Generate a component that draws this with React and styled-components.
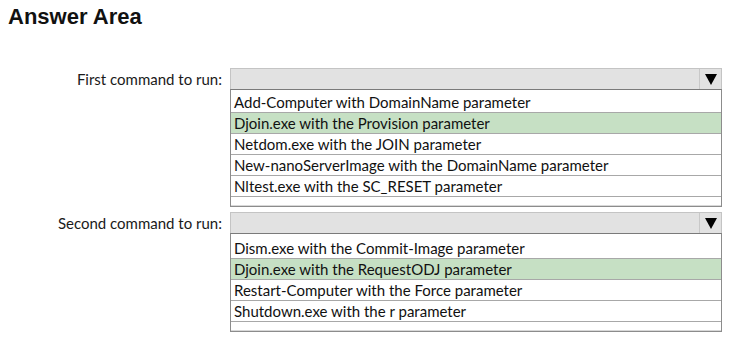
import styled, { createGlobalStyle } from 'styled-components'

const GlobalStyle = createGlobalStyle`
  body {
    margin: 0;
    padding: 0;
    background: #ffffff;
    font-family: 'Lato', 'Open Sans', sans-serif;
  }
`

const questions = [
  {
    label: 'First command to run:',
    topGap: 2,
    options: [
      'Add-Computer with DomainName parameter',
      'Djoin.exe with the Provision parameter',
      'Netdom.exe with the JOIN parameter',
      'New-nanoServerImage with the DomainName parameter',
      'Nltest.exe with the SC_RESET parameter',
    ],
    selected: 1,
  },
  {
    label: 'Second command to run:',
    topGap: 4,
    options: [
      'Dism.exe with the Commit-Image parameter',
      'Djoin.exe with the RequestODJ parameter',
      'Restart-Computer with the Force parameter',
      'Shutdown.exe with the r parameter',
    ],
    selected: 1,
  },
]

const Page = styled.div`
  width: 738px;
  height: 346px;
  display: flex;
  flex-direction: column;
`

const Title = styled.h1`
  margin: 0;
  padding: 4px 0 0 8px;
  font-family: 'Liberation Sans', Arial, sans-serif;
  font-weight: bold;
  font-size: 22px;
  line-height: 25px;
  color: #111;
`

const Questions = styled.div`
  display: flex;
  flex-direction: column;
  gap: 5px;
  margin-top: 39px;
`

const Question = styled.div`
  display: grid;
  grid-template-columns: 230px 492px;
  align-items: start;
`

const Label = styled.div`
  text-align: right;
  padding-right: 8px;
  font-size: 15px;
  line-height: 22px;
  color: #1a1a1a;
`

const Control = styled.div`
  display: flex;
  flex-direction: column;
`

const Header = styled.div`
  height: 21px;
  display: flex;
  justify-content: flex-end;
  background: #e2e2e2;
  border: 1px solid #c4c4c4;
  border-bottom: none;
  box-sizing: border-box;
`

const ArrowButton = styled.div`
  width: 21px;
  display: flex;
  align-items: center;
  justify-content: center;
  border-left: 1px solid #c8c8c8;
  padding-top: 1px;
`

const Arrow = styled.div`
  width: 0;
  height: 0;
  border-left: 6px solid transparent;
  border-right: 6px solid transparent;
  border-top: 11px solid #000;
`

const List = styled.div`
  display: flex;
  flex-direction: column;
  border: 1px solid #8c8c8c;
  border-top-color: #7a7a7a;
  padding-top: ${(p) => p.$topGap}px;
  background: #fff;
`

const Option = styled.div`
  height: 20px;
  line-height: 20px;
  padding-left: 3px;
  font-size: 15px;
  color: #111;
  white-space: nowrap;
  background: ${(p) => (p.$active ? '#c6e0c4' : '#fff')};
  border-bottom: 1px solid #a8a8a8;
`

const Spacer = styled.div`
  height: 8px;
  border-bottom: 1px solid #d8d8d8;
`

export default function App() {
  return (
    <Page>
      <GlobalStyle />
      <Title>Answer Area</Title>
      <Questions>
        {questions.map((q) => (
          <Question key={q.label}>
            <Label>{q.label}</Label>
            <Control>
              <Header>
                <ArrowButton>
                  <Arrow />
                </ArrowButton>
              </Header>
              <List $topGap={q.topGap}>
                {q.options.map((o, i) => (
                  <Option key={o} $active={i === q.selected}>
                    {o}
                  </Option>
                ))}
                <Spacer />
              </List>
            </Control>
          </Question>
        ))}
      </Questions>
    </Page>
  )
}
